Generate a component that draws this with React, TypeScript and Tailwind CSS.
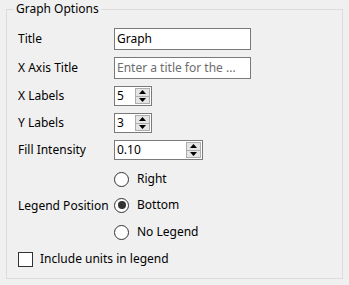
import React from "react";

const font = { fontFamily: '"Noto Sans", "Segoe UI", sans-serif' };

function SpinButtons() {
  return (
    <div className="flex flex-col w-[15px] h-[16px] border border-[#adadad] bg-[#e5e5e5] mr-[1px]">
      <div className="flex-1 flex items-center justify-center border-b border-[#adadad]">
        <svg width="7" height="4" viewBox="0 0 7 4"><polygon points="0,4 7,4 3.5,0" fill="#000" /></svg>
      </div>
      <div className="flex-1 flex items-center justify-center">
        <svg width="7" height="4" viewBox="0 0 7 4"><polygon points="0,0 7,0 3.5,4" fill="#000" /></svg>
      </div>
    </div>
  );
}

function Spin({ value, w }: { value: string; w: string }) {
  return (
    <div className={`flex items-center h-[20px] border border-[#7a7a7a] bg-white ${w}`}>
      <span className="flex-1 pl-[2px] text-black leading-none">{value}</span>
      <SpinButtons />
    </div>
  );
}

function Radio({ label, checked }: { label: string; checked?: boolean }) {
  return (
    <div className="flex items-center h-[20px]">
      <div className="w-[15px] h-[15px] rounded-full border border-[#333] bg-white flex items-center justify-center">
        {checked && <div className="w-[8px] h-[8px] rounded-full bg-[#333]" />}
      </div>
      <span className="ml-[8px]">{label}</span>
    </div>
  );
}

export default function App() {
  return (
    <div className="w-[349px] h-[285px] bg-[#f0f0f0] pt-[9px] pl-[6px] text-[12px] text-black" style={font}>
      <div className="relative w-[337px] h-[270px] border border-[#dcdcdc] pl-[11px] pt-[18px]">
        <div className="absolute left-[7px] top-[-9px] px-[2px] bg-[#f0f0f0] leading-[16px]">Graph Options</div>
        <div className="flex items-center h-[22px]">
          <div className="w-[96px]">Title</div>
          <div className="w-[137px] h-[22px] border border-[#7a7a7a] bg-white pl-[2px] flex items-center">Graph</div>
        </div>
        <div className="flex items-center h-[22px] mt-[7px]">
          <div className="w-[96px]">X Axis Title</div>
          <div className="w-[137px] h-[22px] border border-[#7a7a7a] bg-white pl-[2px] flex items-center text-[#6d6d6d] whitespace-nowrap overflow-hidden">Enter a title for the ...</div>
        </div>
        <div className="flex items-center h-[20px] mt-[7px]">
          <div className="w-[96px]">X Labels</div>
          <Spin value="5" w="w-[38px]" />
        </div>
        <div className="flex items-center h-[20px] mt-[7px]">
          <div className="w-[96px]">Y Labels</div>
          <Spin value="3" w="w-[38px]" />
        </div>
        <div className="flex items-center h-[20px] mt-[7px]">
          <div className="w-[96px]">Fill Intensity</div>
          <Spin value="0.10" w="w-[89px]" />
        </div>
        <div className="flex items-center mt-[9px]">
          <div className="w-[96px]">Legend Position</div>
          <div className="flex flex-col">
            <Radio label="Right" />
            <div className="mt-[6px]"><Radio label="Bottom" checked /></div>
            <div className="mt-[7px]"><Radio label="No Legend" /></div>
          </div>
        </div>
        <div className="flex items-center h-[20px] mt-[7px]">
          <div className="w-[15px] h-[15px] border border-[#333] bg-white" />
          <span className="ml-[7px]">Include units in legend</span>
        </div>
      </div>
    </div>
  );
}
